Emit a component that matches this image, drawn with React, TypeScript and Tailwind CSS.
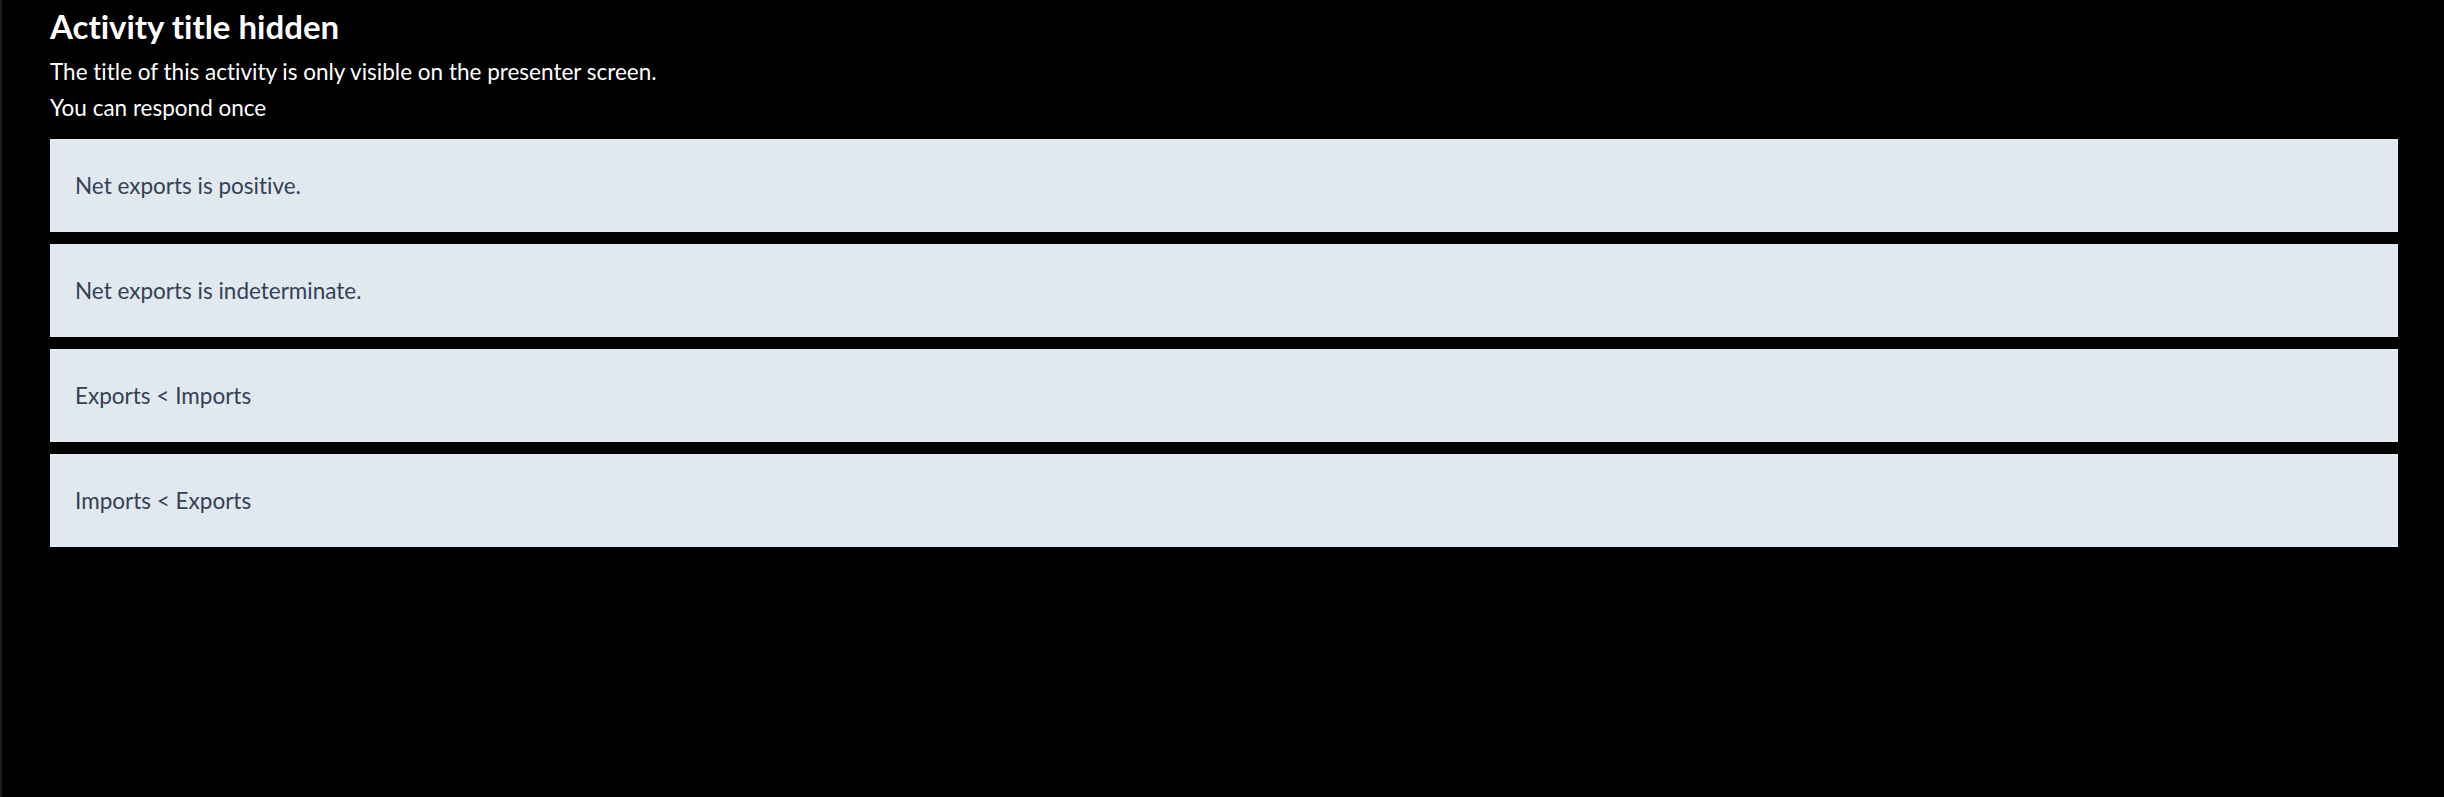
import React from "react";

const choices = [
  "Net exports is positive.",
  "Net exports is indeterminate.",
  "Exports < Imports",
  "Imports < Exports",
];

export default function App() {
  return (
    <div
      className="flex h-[797px] w-full bg-black [font-variant-ligatures:none]"
      style={{ fontFamily: '"Lato", "Liberation Sans", sans-serif' }}
    >
      {/* thin frame edge on the left */}
      <div className="w-[2px] shrink-0 bg-[#1c1c1c]" />

      <main className="flex-1 pl-[48px] pr-[46px] pt-[6px]">
        <h1 className="text-[33px] font-bold leading-[40px] text-white">Activity title hidden</h1>
        <p className="mt-[8px] text-[22.5px] leading-[36px] text-white">
          The title of this activity is only visible on the presenter screen.
        </p>
        <p className="text-[22.5px] leading-[36px] text-white">You can respond once</p>

        <ul className="mt-[13px] flex flex-col gap-[12px]">
          {choices.map((c) => (
            <li
              key={c}
              className="flex h-[93px] items-center bg-[#e1e8f0] px-[25px] text-[22.5px] text-[#334155]"
            >
              {c}
            </li>
          ))}
        </ul>
      </main>
    </div>
  );
}
